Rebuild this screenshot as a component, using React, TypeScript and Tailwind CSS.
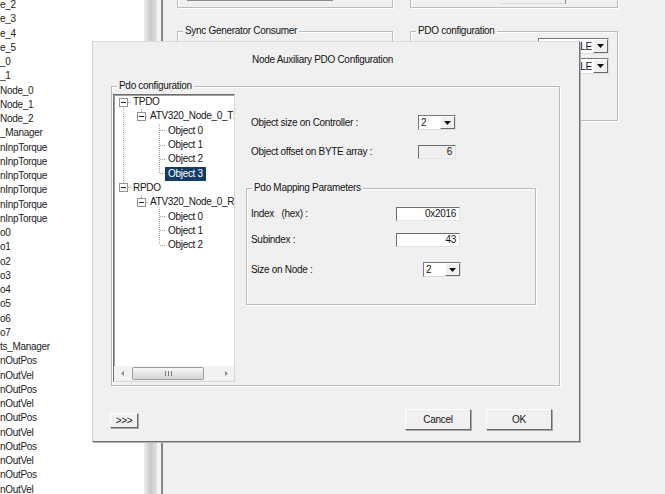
import React from 'react';

const listItems = [
  'e_2', 'e_3', 'e_4', 'e_5', '_0', '_1', 'Node_0', 'Node_1', 'Node_2', '_Manager',
  'nInpTorque', 'nInpTorque', 'nInpTorque', 'nInpTorque', 'nInpTorque', 'nInpTorque',
  'o0', 'o1', 'o2', 'o3', 'o4', 'o5', 'o6', 'o7', 'ts_Manager',
  'nOutPos', 'nOutVel', 'nOutPos', 'nOutVel', 'nOutPos', 'nOutVel', 'nOutPos', 'nOutVel', 'nOutPos', 'nOutVel',
];

const treeRows = [
  { level: 0, text: 'TPDO' },
  { level: 1, text: 'ATV320_Node_0_TxPdo' },
  { level: 2, text: 'Object 0' },
  { level: 2, text: 'Object 1' },
  { level: 2, text: 'Object 2' },
  { level: 2, text: 'Object 3', selected: true },
  { level: 0, text: 'RPDO' },
  { level: 1, text: 'ATV320_Node_0_RxPdo' },
  { level: 2, text: 'Object 0' },
  { level: 2, text: 'Object 1' },
  { level: 2, text: 'Object 2' },
];

const ROW = 14.3;
const cy = (i: number) => 7.15 + ROW * i;

function GroupBox({ label, className = '', children }: { label?: string; className?: string; children?: React.ReactNode }) {
  return (
    <div className={`relative shrink-0 border border-[#bcbcbc] shadow-[inset_1px_1px_0_#ffffff,1px_1px_0_#ffffff] ${className}`}>
      {label && (
        <span className="absolute -top-[7px] left-[5px] bg-[#f0f0f0] px-[2px] leading-[12px] whitespace-nowrap">{label}</span>
      )}
      {children}
    </div>
  );
}

function DropArrow() {
  return (
    <svg width="7" height="4" viewBox="0 0 7 4">
      <path d="M0 0H7L3.5 4Z" fill="#111" />
    </svg>
  );
}

function Combo({ value, className = '', right = false }: { value: string; className?: string; right?: boolean }) {
  return (
    <div className={`flex shrink-0 bg-white border border-t-[#7a7a7a] border-l-[#7a7a7a] border-r-[#dedede] border-b-[#dedede] ${className}`}>
      <span className={`flex-1 flex items-center overflow-hidden whitespace-nowrap ${right ? 'justify-end pr-[1px]' : 'pl-[2px]'}`}>{value}</span>
      <span className="w-[15px] flex items-center justify-center bg-[#f0f0f0] border border-t-[#ffffff] border-l-[#ffffff] border-r-[#6a6a6a] border-b-[#6a6a6a]">
        <DropArrow />
      </span>
    </div>
  );
}

function Edit({ value, className = '', bg = 'bg-white' }: { value: string; className?: string; bg?: string }) {
  return (
    <div className={`flex items-center justify-end pr-[3px] shrink-0 border border-t-[#6e6e6e] border-l-[#6e6e6e] border-r-[#e3e3e3] border-b-[#e3e3e3] ${bg} ${className}`}>
      {value}
    </div>
  );
}

function Button({ label, className = '' }: { label: string; className?: string }) {
  return (
    <div className={`flex items-center justify-center shrink-0 bg-[#f0f0f0] border border-t-[#fdfdfd] border-l-[#fdfdfd] border-r-[#6a6a6a] border-b-[#6a6a6a] shadow-[1px_1px_0_#a8a8a8] ${className}`}>
      {label}
    </div>
  );
}

function Expander({ className = '' }: { className?: string }) {
  return (
    <span className={`w-[9px] h-[9px] shrink-0 border border-[#939393] bg-white flex items-center justify-center ${className}`}>
      <span className="w-[5px] h-px bg-[#222]" />
    </span>
  );
}

function TreeLines() {
  const d = { stroke: '#a3a3a3', strokeDasharray: '1 1', strokeWidth: 1 };
  const groups = [0, 6];
  return (
    <svg className="absolute left-0 top-0" width="120" height="170" shapeRendering="crispEdges">
      {/* root column */}
      <line x1="9.5" y1={cy(0)} x2="9.5" y2={cy(6)} {...d} />
      <line x1="9.5" y1={cy(0)} x2="17" y2={cy(0)} {...d} />
      <line x1="9.5" y1={cy(6)} x2="17" y2={cy(6)} {...d} />
      {groups.map((g) => (
        <g key={g}>
          <line x1="27.5" y1={ROW * (g + 1)} x2="27.5" y2={cy(g + 1)} {...d} />
          <line x1="27.5" y1={cy(g + 1)} x2="34" y2={cy(g + 1)} {...d} />
          <line x1="45.5" y1={ROW * (g + 2)} x2="45.5" y2={cy(g === 0 ? 5 : 10)} {...d} />
          {(g === 0 ? [2, 3, 4, 5] : [8, 9, 10]).map((r) => (
            <line key={r} x1="45.5" y1={cy(r)} x2="52" y2={cy(r)} {...d} />
          ))}
        </g>
      ))}
    </svg>
  );
}

function Tree() {
  return (
    <div className="w-[122px] h-[288px] mt-[7px] ml-[1px] shrink-0 flex flex-col bg-white border border-t-[#6e6e6e] border-l-[#6e6e6e] border-r-[#d9d9d9] border-b-[#d9d9d9] shadow-[inset_1px_1px_0_#a0a0a0]">
      <div className="relative flex-1 overflow-hidden">
        <TreeLines />
        <div className="relative flex flex-col">
          {treeRows.map((r, i) => (
            <div key={i} className="flex items-center h-[14.3px] whitespace-nowrap">
              {r.level === 0 && <Expander className="ml-[5px] mr-[2px]" />}
              {r.level === 1 && <Expander className="ml-[23px] mr-[1px]" />}
              {r.level === 2 && <span className="w-[51px] shrink-0" />}
              <span className={`px-[3px] leading-[14px] ${r.selected ? 'bg-[#143b66] text-white' : ''}`}>{r.text}</span>
            </div>
          ))}
        </div>
      </div>
      <div className="h-[15px] shrink-0 flex items-center bg-[#f2f2f2]">
        <div className="w-[16px] h-full flex items-center justify-center">
          <svg width="3" height="5" viewBox="0 0 3 5"><path d="M3 0V5L0 2.5Z" fill="#8c8c8c" /></svg>
        </div>
        <div className="ml-[2px] w-[72px] h-[13px] rounded-[2px] border border-[#9c9c9c] bg-linear-to-b from-[#f7f7f7] to-[#d6d6d6] flex items-center justify-center gap-[2px]">
          <span className="w-px h-[5px] bg-[#7a7a7a]" />
          <span className="w-px h-[5px] bg-[#7a7a7a]" />
          <span className="w-px h-[5px] bg-[#7a7a7a]" />
        </div>
        <div className="flex-1" />
        <div className="w-[16px] h-full flex items-center justify-center">
          <svg width="3" height="5" viewBox="0 0 3 5"><path d="M0 0V5L3 2.5Z" fill="#8c8c8c" /></svg>
        </div>
      </div>
    </div>
  );
}

function Dialog() {
  return (
    <div className="absolute left-[92px] top-[41px] w-[488px] h-[401px] flex flex-col bg-[#f0f0f0] border border-t-[#dadada] border-l-[#d0d0d0] border-r-[#707070] border-b-[#707070] shadow-[1px_1px_0_#b4b4b4]">
      <div className="pl-[159px] pt-[12px] leading-[12px]">Node Auxiliary PDO Configuration</div>

      <GroupBox label="Pdo configuration" className="ml-[18px] mt-[20px] w-[449px] h-[300px]">
        <div className="flex items-start">
          <Tree />
          <div className="ml-[11px] flex flex-col">
            <div className="flex items-center mt-[28px]">
              <span className="w-[172px] pl-[5px] whitespace-nowrap">Object size on Controller :</span>
              <Combo value="2" className="w-[38px] h-[15px]" />
            </div>
            <div className="flex items-center mt-[14px]">
              <span className="w-[172px] pl-[5px] whitespace-nowrap">Object offset on BYTE array :</span>
              <Edit value="6" bg="bg-[#f0f0f0]" className="w-[38px] h-[14px]" />
            </div>
            <GroupBox label="Pdo Mapping Parameters" className="mt-[29px] w-[290px] h-[117px]">
              <div className="flex items-center mt-[17px]">
                <span className="w-[149px] pl-[4px] whitespace-nowrap">Index &nbsp; (hex) :</span>
                <Edit value="0x2016" className="w-[64px] h-[14px]" />
              </div>
              <div className="flex items-center mt-[11px]">
                <span className="w-[149px] pl-[4px] whitespace-nowrap">Subindex :</span>
                <Edit value="43" className="w-[64px] h-[14px]" />
              </div>
              <div className="flex items-center mt-[15px]">
                <span className="w-[176px] pl-[4px] whitespace-nowrap">Size on Node :</span>
                <Combo value="2" className="w-[38px] h-[15px]" />
              </div>
            </GroupBox>
          </div>
        </div>
      </GroupBox>

      <div className="flex items-start mt-[23px]">
        <Button label=">>>" className="ml-[17px] mt-[4px] w-[28px] h-[15px]" />
        <div className="flex-1" />
        <Button label="Cancel" className="w-[66px] h-[21px]" />
        <Button label="OK" className="ml-[15px] mr-[27px] w-[66px] h-[21px]" />
      </div>
    </div>
  );
}

export default function App() {
  return (
    <div className="relative w-[665px] h-[494px] overflow-hidden flex bg-[#f0f0f0] text-[10px] tracking-[-0.3px] text-[#141414] font-['Liberation_Sans',Arial,sans-serif]">
      {/* object list on the left, scrolled horizontally */}
      <div className="w-[144px] shrink-0 bg-white overflow-hidden">
        <div className="flex flex-col -mt-[2px]">
          {listItems.map((t, i) => (
            <div key={i} className="h-[14.25px] leading-[14.25px] whitespace-nowrap text-[#222]">{t}</div>
          ))}
        </div>
      </div>

      {/* splitter */}
      <div className="w-[13px] shrink-0 bg-linear-to-r from-[#eeeeee] via-[#c9c9c9] to-[#e3e3e3]" />
      <div className="w-[4px] shrink-0 bg-[#f5f5f5]" />
      <div className="w-[2px] shrink-0 bg-[#858585]" />

      {/* main form behind the dialog */}
      <div className="flex-1 flex flex-col">
        <div className="flex ml-[14px] gap-[17px] -mt-[32px]">
          <GroupBox className="w-[216px] h-[40px]">
            <div className="ml-[9px] mt-[16px] w-[146px] h-[16px] border-r border-b-2 border-r-[#8a8a8a] border-b-[#8a8a8a]" />
          </GroupBox>
          <GroupBox className="w-[208px] h-[40px]">
            <div className="ml-[90px] mt-[19px] w-[65px] h-[16px] border-r border-b border-r-[#8a8a8a] border-b-[#d8d8d8]" />
          </GroupBox>
        </div>
        <div className="flex items-start ml-[14px] gap-[17px] mt-[23px]">
          <GroupBox label="Sync Generator Consumer" className="w-[216px] h-[260px]" />
          <GroupBox label="PDO configuration" className="w-[208px] h-[90px]">
            <Combo value="DISABLE" right className="ml-[127px] mt-[6px] w-[71px] h-[16px]" />
            <Combo value="DISABLE" right className="ml-[127px] mt-[4px] w-[71px] h-[16px]" />
          </GroupBox>
        </div>
      </div>

      <Dialog />
    </div>
  );
}
